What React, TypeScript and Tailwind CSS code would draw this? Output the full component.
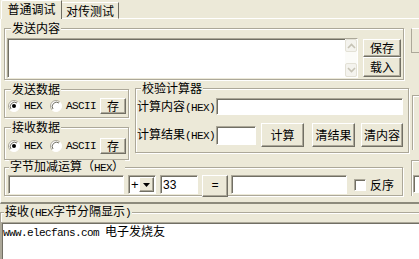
import type { ReactNode } from 'react';

const mono = "font-['Liberation_Mono',monospace] text-[11px] tracking-[-0.6px]";
const raised =
  'flex shrink-0 items-center justify-center bg-[#ece9d8] border border-t-white border-l-white border-r-[#716f64] border-b-[#716f64] shadow-[inset_-1px_-1px_0_#aca899]';
const sunken =
  'shrink-0 bg-white border border-t-[#aca899] border-l-[#aca899] border-r-white border-b-white shadow-[inset_1px_1px_0_#716f64]';

function Hex({ children }: { children: ReactNode }) {
  return <span className={mono}>{children}</span>;
}

interface GroupProps {
  title: ReactNode;
  className?: string;
  legend?: string;
  children?: ReactNode;
}

/** Win32 group box: etched frame with the caption cut into the top line. */
function Group({ title, className = '', legend = '', children }: GroupProps) {
  return (
    <fieldset
      className={`shrink-0 border border-[#aca899] shadow-[inset_1px_1px_0_#fff,1px_1px_0_#fff] ${className}`}
    >
      <legend className={`bg-[#ece9d8] px-px leading-[12px] whitespace-nowrap ${legend}`}>{title}</legend>
      {children}
    </fieldset>
  );
}

function Radio({ on }: { on?: boolean }) {
  return (
    <svg width="12" height="12" viewBox="0 0 12 12" className="shrink-0">
      <circle cx="6" cy="6" r="5.5" fill="#fff" />
      <path d="M2.1 9.9 A5.5 5.5 0 0 1 9.9 2.1" fill="none" stroke="#aca899" />
      <path d="M3 9 A4.3 4.3 0 0 1 9 3" fill="none" stroke="#716f64" />
      <path d="M9.9 2.1 A5.5 5.5 0 0 1 2.1 9.9" fill="none" stroke="#fff" />
      {on && <circle cx="6" cy="6" r="2" fill="#000" />}
    </svg>
  );
}

function Chevron({ up }: { up?: boolean }) {
  return (
    <svg width="9" height="6" viewBox="0 0 9 6">
      <path
        d={up ? 'M1 5 L4.5 1.5 L8 5' : 'M1 1 L4.5 4.5 L8 1'}
        fill="none"
        stroke="#c6c3b5"
        strokeWidth="1.6"
      />
    </svg>
  );
}

function RadioRow({ top }: { top: string }) {
  return (
    <div className={`ml-[3px] flex items-center ${top}`}>
      <Radio on />
      <span className={`ml-[4px] ${mono}`}>HEX</span>
      <span className="ml-[8px]">
        <Radio />
      </span>
      <span className={`ml-[4px] ${mono}`}>ASCII</span>
      <button className={`${raised} ml-[4px] h-[16px] w-[26px]`}>存</button>
    </div>
  );
}

export default function App() {
  return (
    <div className="flex h-[259px] w-[419px] flex-col overflow-hidden bg-[#ece9d8] font-['Noto_Sans_CJK_SC',sans-serif] text-[12px] leading-[12px] text-black">
      {/* tab strip */}
      <div className="flex h-[19px] shrink-0 items-end">
        <div className="ml-px flex h-[19px] w-[61px] items-center justify-center rounded-tl-[2px] border-t border-l border-r border-t-white border-l-white border-r-[#716f64] pb-[2px]">
          普通调试
        </div>
        <div className="flex h-[17px] w-[57px] items-center justify-center border-t border-r border-b border-t-white border-r-[#716f64] border-b-white pt-px">
          对传测试
        </div>
        <div className="h-px flex-1 bg-white" />
      </div>

      {/* tab pane */}
      <div className="flex h-[185px] shrink-0 flex-col border-l border-b-2 border-l-white border-b-[#8c8a7c] pl-[3px]">
        <div className="mt-[3px] flex shrink-0 items-start">
          <Group title="发送内容" className="h-[58px] w-[400px]" legend="ml-[6px]">
            <div className="mt-[4px] ml-[2px] flex">
              <div className={`${sunken} flex h-[40px] w-[351px] justify-end`}>
                <div className="flex w-[12px] flex-col justify-between bg-[#fbfbf8]">
                  <div className="flex h-[13px] items-center justify-center rounded-[2px] border border-[#e3e1d6] bg-[#f4f3ee]">
                    <Chevron up />
                  </div>
                  <div className="flex h-[14px] items-center justify-center rounded-[2px] border border-[#e3e1d6] bg-[#f4f3ee]">
                    <Chevron />
                  </div>
                </div>
              </div>
              <div className="ml-[5px] flex flex-col">
                <button className={`${raised} mt-px h-[18px] w-[38px]`}>保存</button>
                <button className={`${raised} h-[20px] w-[38px]`}>载入</button>
              </div>
            </div>
          </Group>
          <div className="mt-[6px] ml-[7px] h-[25px] w-[20px] shrink-0 border border-t-white border-l-[#aca899] border-b-[#aca899]" />
        </div>

        <div className="mt-[2px] flex shrink-0 items-start">
          <div className="flex w-[125px] shrink-0 flex-col">
            <Group title="发送数据" className="mt-px h-[35px] w-[125px]" legend="ml-[6px]">
              <RadioRow top="mt-[3px]" />
            </Group>
            <Group title="接收数据" className="mt-[3px] h-[39px] w-[125px]" legend="ml-[6px]">
              <RadioRow top="mt-[5px]" />
            </Group>
          </div>

          <Group title="校验计算器" className="ml-[6px] h-[71px] w-[274px]" legend="ml-[5px]">
            <div className="mt-[4px] ml-px flex items-center">
              <span className="w-[79px] whitespace-nowrap">
                计算内容<Hex>(HEX)</Hex>
              </span>
              <div className={`${sunken} h-[17px] w-[187px]`} />
            </div>
            <div className="mt-[8px] ml-px flex items-center">
              <span className="w-[79px] whitespace-nowrap">
                计算结果<Hex>(HEX)</Hex>
              </span>
              <div className={`${sunken} h-[19px] w-[40px]`} />
              <button className={`${raised} ml-[5px] h-[24px] w-[43px]`}>计算</button>
              <button className={`${raised} ml-[8px] h-[24px] w-[43px]`}>清结果</button>
              <button className={`${raised} ml-[6px] h-[24px] w-[42px]`}>清内容</button>
            </div>
          </Group>
          <div className="mt-[13px] ml-[3px] h-[55px] w-[20px] shrink-0 border-l border-t border-l-[#aca899] border-t-[#aca899] shadow-[inset_1px_1px_0_#fff]" />
        </div>

        <div className="flex shrink-0 items-start">
          <Group
            title={
              <>
                字节加减运算（<Hex>HEX</Hex>）
              </>
            }
            className="h-[36px] w-[399px]"
            legend="ml-[4px]"
          >
            <div className="mt-px ml-[3px] flex items-start">
              <div className={`${sunken} h-[19px] w-[116px]`} />
              <div className={`${sunken} ml-[4px] flex h-[19px] w-[28px] items-center justify-between`}>
                <span className="ml-[2px] font-['Liberation_Sans',sans-serif] text-[13px]">+</span>
                <div className={`${raised} mr-px h-[15px] w-[15px]`}>
                  <svg width="7" height="4" viewBox="0 0 7 4">
                    <path d="M0 0 H7 L3.5 4 Z" fill="#000" />
                  </svg>
                </div>
              </div>
              <div className={`${sunken} ml-[4px] flex h-[19px] w-[38px] items-center pl-[2px] font-['Liberation_Sans',sans-serif]`}>
                33
              </div>
              <button className={`${raised} ml-[4px] h-[22px] w-[26px] font-['Liberation_Mono',monospace]`}>=</button>
              <div className={`${sunken} ml-[3px] h-[19px] w-[116px]`} />
              <div className={`${sunken} mt-[4px] ml-[7px] h-[12px] w-[12px]`} />
              <span className="mt-[4px] ml-[4px]">反序</span>
            </div>
          </Group>
          <div className="ml-[8px] flex h-[36px] w-[20px] shrink-0 flex-col border-l border-t border-[#aca899] shadow-[inset_1px_1px_0_#fff]">
            <div className={`${sunken} mt-[14px] ml-px h-[18px] w-[20px]`} />
          </div>
        </div>
      </div>

      {/* receive area */}
      <Group
        title={
          <>
            接收<Hex>(HEX</Hex>字节分隔显示<Hex>)</Hex>
          </>
        }
        className="mt-px h-[60px] w-[440px] border-r-0 border-b-0"
        legend="ml-[3px]"
      >
        <div className={`${sunken} mt-[3px] h-[40px] w-[440px] pt-[2px] pl-px whitespace-nowrap`}>
          <span className={mono}>www.elecfans.com </span>电子发烧友
        </div>
      </Group>
    </div>
  );
}
